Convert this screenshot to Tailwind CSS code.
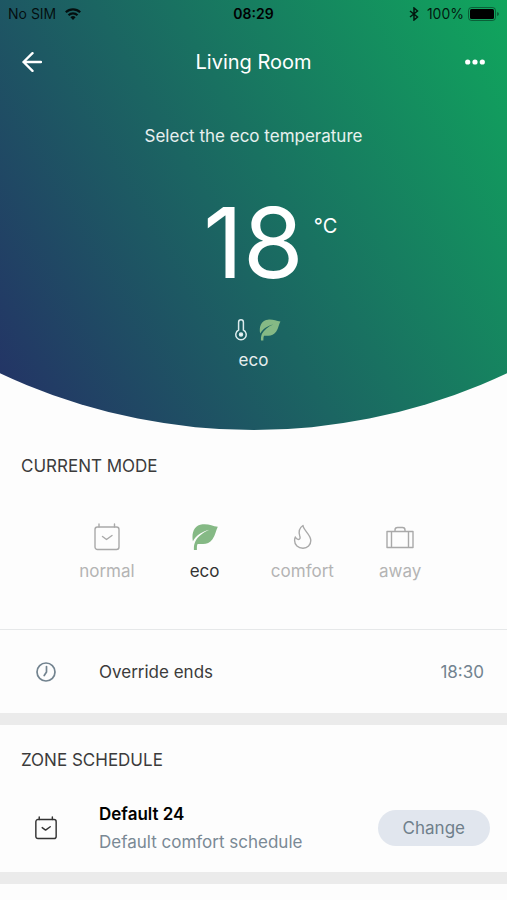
<!DOCTYPE html>
<html lang="en">
<head>
<meta charset="utf-8">
<meta name="viewport" content="width=device-width, initial-scale=1">
<title>Living Room</title>
<script src="https://cdn.jsdelivr.net/npm/@tailwindcss/browser@4"></script>
</head>
<body class="min-h-screen bg-[#fdfdfd] font-[Inter,sans-serif] text-[17px] leading-6 text-[#3b3b3b]">
<svg class="hidden" aria-hidden="true">
  <symbol id="leaf" viewBox="0 0 26 27">
    <path fill="#85b985" d="M.9 17.800C-.8 9 2.500 1.600 10.500 .8C16.500 .1 20.500 2.600 25.800 3.200C23.800 7 23.600 11 20.500 15.800C17.800 19.600 14.500 20.600 10.500 20.500H5.600C4.800 22 4.900 24 4.900 26.400H1.900C1.800 23 2.100 20.800 3.200 18.200C5.500 13.500 10 9.500 17.300 6.300C10 8.200 4 12 .9 17.800Z"/>
  </symbol>
  <symbol id="calendar" viewBox="0 0 26 28">
    <g fill="none" stroke="currentColor" stroke-linecap="round" stroke-linejoin="round">
      <rect x="1" y="4" width="24" height="22.500" rx="2.500"/>
      <path d="M5 1V4M20.500 1V4M8.500 13.500L12.500 16.500L18 12.500"/>
    </g>
  </symbol>
</svg>

<header class="bg-[linear-gradient(60deg,#243066_0%,#10a65d_100%)] pb-[58px] text-white [clip-path:ellipse(117%_592px_at_50%_calc(100%_-_592px))]">
  <div class="grid h-7 grid-cols-3 items-center px-2 text-sm text-black/85">
    <div class="flex items-center gap-2">
      <span>No SIM</span>
      <svg class="h-3 w-[18px]" viewBox="0 0 16 12" fill="none" stroke="currentColor" stroke-width="2.200" aria-label="Wi-Fi">
        <path d="M.8 4.300A10.300 10.300 0 0 1 15.200 4.300M3.500 7.200A6.400 6.400 0 0 1 12.500 7.200"/>
        <path fill="currentColor" stroke="none" d="M8 12L5.400 9.300A3.800 3.800 0 0 1 10.600 9.300Z"/>
      </svg>
    </div>
    <span class="text-center font-semibold text-black">08:29</span>
    <div class="flex items-center justify-end gap-1">
      <svg class="h-[14px] w-[10px]" viewBox="0 0 10 14" fill="none" stroke="currentColor" stroke-width="1.500" aria-label="Bluetooth">
        <path d="M1 4L8.500 10L5 13V1L8.500 4L1 10"/>
      </svg>
      <span class="ml-1">100%</span>
      <svg class="h-[14px] w-[31px]" viewBox="0 0 31 14" aria-label="Battery full">
        <rect x=".5" y=".5" width="27" height="13" rx="3" fill="none" stroke="#000" stroke-opacity=".4"/>
        <rect x="2" y="2" width="24" height="10" rx="1.500" fill="#000"/>
        <path d="M29 5Q31 5.500 31 7T29 9Z" fill="#000" fill-opacity=".4"/>
      </svg>
    </div>
  </div>

  <div class="grid h-17 grid-cols-[44px_1fr_44px] items-center px-[10px]">
    <button type="button" aria-label="Back" class="flex h-11 items-center justify-center">
      <svg class="h-5 w-5" viewBox="0 0 20 20" fill="none" stroke="currentColor" stroke-width="2.400" stroke-linecap="round" stroke-linejoin="round">
        <path d="M10.500 1.200L1.500 10L10.500 18.800M1.500 10H19"/>
      </svg>
    </button>
    <h1 class="text-center text-xl">Living Room</h1>
    <button type="button" aria-label="More options" class="flex h-11 items-center justify-center">
      <svg class="h-[6px] w-5" viewBox="0 0 20 6" fill="currentColor">
        <circle cx="2.700" cy="3" r="2.600"/><circle cx="10" cy="3" r="2.600"/><circle cx="17.300" cy="3" r="2.600"/>
      </svg>
    </button>
  </div>

  <p class="mt-7 text-center text-white/90">Select the eco temperature</p>

  <div class="mt-[46px] flex h-[98px] justify-center gap-[10px]">
    <span class="w-6"></span>
    <span class="text-[98px] leading-[98px]">18</span>
    <span class="mt-[18px] w-6 text-xl">°C</span>
  </div>

  <div class="mt-6 flex flex-col items-center gap-1">
    <div class="flex h-7 items-center gap-3 pl-2">
      <svg class="h-[22px] w-3" viewBox="0 0 12 22" fill="none" stroke="#dcebed" stroke-width="1.500" aria-hidden="true">
        <path d="M3.600 11V3.200A2.400 2.400 0 0 1 8.400 3.200V11A5.200 5.200 0 1 1 3.600 11Z"/>
        <circle cx="6" cy="15.600" r="1.500" fill="#fff"/>
      </svg>
      <svg class="h-[22px] w-[22px]" aria-hidden="true"><use href="#leaf"/></svg>
    </div>
    <p class="text-white/90">eco</p>
  </div>
</header>

<main>
  <section>
    <h2 class="px-[21px] pt-6">CURRENT MODE</h2>
    <div class="mt-[45px] grid grid-cols-4 px-[58px] pb-[46px] text-[#b4b4b4]">
      <button type="button" aria-pressed="false" class="flex flex-col items-center gap-2">
        <svg class="h-7 w-[26px] text-[#a9a9a9]" stroke-width="1.400" aria-hidden="true"><use href="#calendar"/></svg>
        <span>normal</span>
      </button>
      <button type="button" aria-pressed="true" class="flex flex-col items-center gap-2 text-[#333]">
        <svg class="h-7 w-[26px]" aria-hidden="true"><use href="#leaf"/></svg>
        <span>eco</span>
      </button>
      <button type="button" aria-pressed="false" class="flex flex-col items-center gap-2">
        <svg class="h-7 w-5" viewBox="0 0 20 28" fill="none" stroke="#a9a9a9" stroke-width="1.400" stroke-linejoin="round" aria-hidden="true">
          <path d="M11 2.500C11.500 7.500 18.800 11.500 18.800 17.500C18.800 22 15.500 25.200 11 25.200C6 25.200 2.600 22 2.600 17.500C2.600 16.200 2.800 15 3.300 14C4 15.500 4.800 16.300 6.300 16.500C8 16.500 8.500 15 7.800 13C6.500 9 7.500 4.800 11 2.500Z"/>
        </svg>
        <span>comfort</span>
      </button>
      <button type="button" aria-pressed="false" class="flex flex-col items-center gap-2">
        <svg class="h-7 w-7" viewBox="0 0 28 28" fill="none" stroke="#a9a9a9" stroke-width="1.400" stroke-linejoin="round" aria-hidden="true">
          <path d="M1 8.500H27V24.500H1ZM5.500 8.500V24.500M22.500 8.500V24.500M9 8.500V7Q9 4.500 11.500 4.500H16.500Q19 4.500 19 7V8.500"/>
        </svg>
        <span>away</span>
      </button>
    </div>
  </section>

  <section class="flex h-[84px] items-center border-t border-[#e6e8e9] pr-[23px] pl-9">
    <svg class="h-5 w-5" viewBox="0 0 20 20" fill="none" stroke="#72838f" stroke-width="1.700" stroke-linecap="round" aria-hidden="true">
      <circle cx="10" cy="10" r="9"/>
      <path d="M10.500 4.500V10L8.200 13.500"/>
    </svg>
    <span class="ml-[43px] flex-1">Override ends</span>
    <time class="text-[#72838f]">18:30</time>
  </section>

  <section class="border-y-12 border-[#ebebeb] pt-[23px] pb-4">
    <h2 class="px-[21px]">ZONE SCHEDULE</h2>
    <div class="mt-7 flex items-center pr-[17px] pl-[35px]">
      <svg class="h-6 w-[22px] text-[#333]" stroke-width="1.700" aria-hidden="true"><use href="#calendar"/></svg>
      <div class="ml-[42px] flex-1 leading-7">
        <h3 class="font-semibold text-black">Default 24</h3>
        <p class="text-[#7a8995]">Default comfort schedule</p>
      </div>
      <button type="button" class="h-9 rounded-full bg-[#e1e6ee] px-[25px] text-[#6f7f8b]">Change</button>
    </div>
  </section>
</main>
</body>
</html>
